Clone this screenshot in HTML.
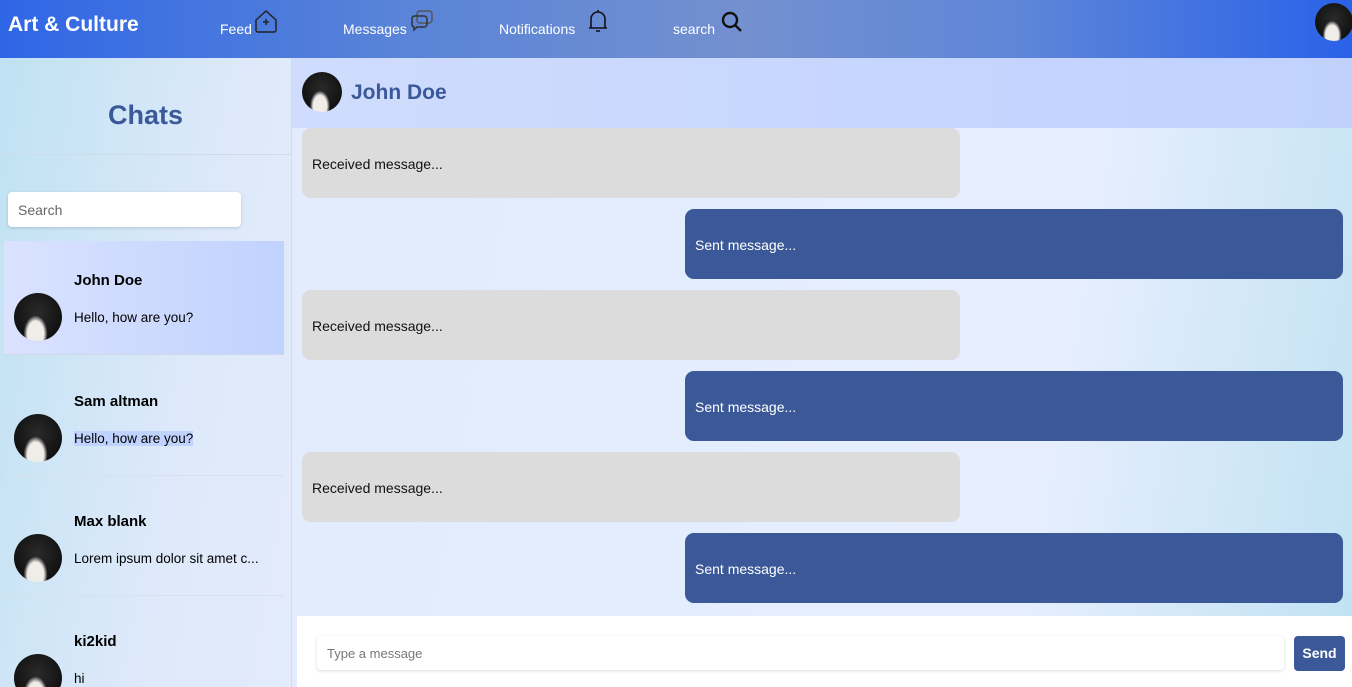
<!DOCTYPE html><html><head><style>
*{box-sizing:border-box;margin:0;padding:0}
html,body{width:1352px;height:687px;overflow:hidden}
body{font-family:"Liberation Sans",sans-serif;position:relative;background:#e4ecfc}
.top{position:absolute;left:0;top:0;width:1352px;height:58px;background:linear-gradient(90deg,#2f66e6 0%,#5a84d8 30%,#7390cf 55%,#5f86d8 75%,#2a62e8 100%)}
.logo{position:absolute;left:8px;top:13px;color:#fff;font-weight:bold;font-size:21px}
.nav{position:absolute;top:21px;color:#fff;font-size:14px}
.side{position:absolute;left:0;top:58px;width:292px;height:629px;overflow:hidden;background:linear-gradient(100deg,#bfe2f2 0%,#dde9fa 60%,#e3ebfc 100%);border-right:1px solid #d3dcea}
.chats{position:absolute;left:0;top:0;width:291px;height:97px;border-bottom:1px solid #d0dbe8;text-align:center;line-height:115px;color:#3b5998;font-weight:bold;font-size:27px}
.search{position:absolute;left:8px;top:134px;width:233px;height:35px;background:#fff;border-radius:4px;box-shadow:0 1px 3px rgba(0,0,0,.15);font-size:14px;color:#666;padding:10px}
.item{position:absolute;left:4px;width:280px;height:114px;border-bottom:1px solid #d6e2ee}
.item.sel{background:linear-gradient(90deg,#dae2ff,#c0d2fe);border-bottom:1px solid #d0d8e8}
.av{position:absolute;width:48px;height:48px;border-radius:50%;background:radial-gradient(ellipse at 45% 85%,#f0ece8 0 22%,transparent 32%),radial-gradient(circle at 50% 40%,#2a2a2a,#111 70%)}
.item .av{left:10px;top:52px}
.nm{position:absolute;left:70px;top:31px;font-weight:bold;font-size:15px}
.ms{position:absolute;left:70px;top:69px;font-size:13.5px}
.main{position:absolute;left:292px;top:58px;width:1060px;height:629px;overflow:hidden;background:linear-gradient(100deg,#e2ecfd 0%,#e6eefe 70%,#c0e2f2 100%)}
.ch{position:absolute;left:0;top:0;width:1060px;height:70px;background:linear-gradient(90deg,#cfdcfd,#c0d1fe)}
.ch .av{left:10px;top:14px;width:40px;height:40px}
.ch span{position:absolute;left:59px;top:23px;font-size:21px;font-weight:bold;color:#3b5998}
.b{position:absolute;height:70px;border-radius:9px;font-size:14px;padding-left:10px;line-height:72px}
.r{left:10px;width:658px;background:#dcdcdc;color:#111}
.s{left:393px;width:658px;background:#3b5998;color:#fff}
.bar{position:absolute;left:297px;top:616px;width:1055px;height:71px;background:#fff}
.in{position:absolute;left:20px;top:20px;width:967px;height:34px;border-radius:4px;box-shadow:0 1px 3px rgba(0,0,0,.15);font-size:13px;color:#777;padding:10px}
.send{position:absolute;left:997px;top:20px;width:51px;height:35px;background:#3b5998;color:#fff;border-radius:4px;font-size:14px;font-weight:bold;text-align:center;line-height:35px}
</style></head><body>
<div class="top">
<div class="logo">Art &amp; Culture</div>
<div class="nav" style="left:220px">Feed</div>
<svg style="position:absolute;left:254px;top:9px" width="24" height="24" viewBox="0 0 24 24" fill="none" stroke="#222" stroke-width="1.5"><path d="M2 11L12 2l10 9v10a2 2 0 0 1-2 2H4a2 2 0 0 1-2-2z"/><path d="M12 10v6M9 13h6"/></svg>
<div class="nav" style="left:343px">Messages</div>
<svg style="position:absolute;left:410px;top:10px" width="24" height="24" viewBox="0 0 24 24" fill="none" stroke="#333" stroke-width="1.5"><rect x="7" y="1" width="15" height="12" rx="3" stroke="#555"/><path d="M4 6h10a3 3 0 0 1 3 3v5a3 3 0 0 1-3 3H7l-3 3v-3a3 3 0 0 1-2-3V9a3 3 0 0 1 2-3z"/></svg>
<div class="nav" style="left:499px">Notifications</div>
<svg style="position:absolute;left:586px;top:8px" width="24" height="26" viewBox="0 0 24 26" fill="none" stroke="#111" stroke-width="1.6"><path d="M5 20V11a7 7 0 0 1 14 0v9M3 20h18M10 23h4M12 2v2"/></svg>
<div class="nav" style="left:673px">search</div>
<svg style="position:absolute;left:720px;top:10px" width="24" height="24" viewBox="0 0 24 24" fill="none" stroke="#111" stroke-width="2.4"><circle cx="10" cy="10" r="7"/><path d="M15 15l6 6"/></svg>
<div class="av" style="left:1315px;top:3px;width:38px;height:38px"></div>
</div>
<div class="side">
<div class="chats">Chats</div>
<div class="search">Search</div>
<div class="item sel" style="top:183px"><div class="av"></div><div class="nm">John Doe</div><div class="ms">Hello, how are you?</div></div>
<div class="item" style="top:304px"><div class="av"></div><div class="nm">Sam altman</div><div class="ms"><span style="background:#c0d2fe">Hello, how are you?</span></div></div>
<div class="item" style="top:424px"><div class="av"></div><div class="nm">Max blank</div><div class="ms">Lorem ipsum dolor sit amet c...</div></div>
<div class="item" style="top:544px"><div class="av"></div><div class="nm">ki2kid</div><div class="ms">hi</div></div>
</div>
<div class="main">
<div class="ch"><div class="av"></div><span>John Doe</span></div>
<div class="b r" style="top:70px">Received message...</div>
<div class="b s" style="top:151px">Sent message...</div>
<div class="b r" style="top:232px">Received message...</div>
<div class="b s" style="top:313px">Sent message...</div>
<div class="b r" style="top:394px">Received message...</div>
<div class="b s" style="top:475px">Sent message...</div>
</div>
<div class="bar"><div class="in">Type a message</div><div class="send">Send</div></div>
</body></html>
